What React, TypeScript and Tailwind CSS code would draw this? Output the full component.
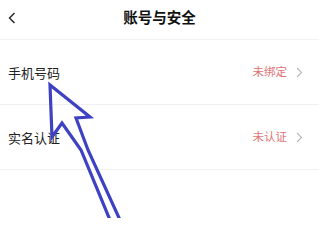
import React from "react";

const font = { fontFamily: '"Noto Sans CJK SC", "Noto Sans", sans-serif' };

function Chevron() {
  return (
    <svg width="7" height="11" viewBox="0 0 7 11" className="ml-[9px]">
      <path d="M1 1 L5.5 5.5 L1 10" fill="none" stroke="#b8b8b8" strokeWidth="1.1" />
    </svg>
  );
}

function Row({ label, status }: { label: string; status: string }) {
  return (
    <div className="flex items-center justify-between h-[65px] pl-[8px] pr-[16px] border-b border-[#f0f0f0]">
      <span className="text-[13px] text-[#222] leading-none">{label}</span>
      <div className="flex items-center">
        <span className="text-[11.5px] text-[#e07476] leading-none">{status}</span>
        <Chevron />
      </div>
    </div>
  );
}

export default function App() {
  return (
    <div className="relative w-[319px] h-[218px] bg-white overflow-hidden" style={font}>
      <div className="relative flex items-center justify-center h-[40px] pb-[4px] border-b border-[#f3f3f3]">
        <svg width="8" height="12" viewBox="0 0 8 12" className="absolute left-[8px] top-[12px]">
          <path d="M6.5 1 L1.5 6 L6.5 11" fill="none" stroke="#222" strokeWidth="1.4" />
        </svg>
        <span className="text-[14.5px] font-semibold text-[#111] leading-none">账号与安全</span>
      </div>
      <Row label="手机号码" status="未绑定" />
      <Row label="实名认证" status="未认证" />
      <svg
        className="absolute left-0 top-0 pointer-events-none"
        width="319"
        height="218"
        viewBox="0 0 319 218"
      >
        <path
          d="M110 220 L81 150 L62 123 L52 137 L50 85 L90 117 L76 118 L88 150 L120 220"
          fill="none"
          stroke="#3d41c2"
          strokeWidth="3.2"
          strokeLinejoin="miter"
          strokeLinecap="round"
        />
      </svg>
    </div>
  );
}
